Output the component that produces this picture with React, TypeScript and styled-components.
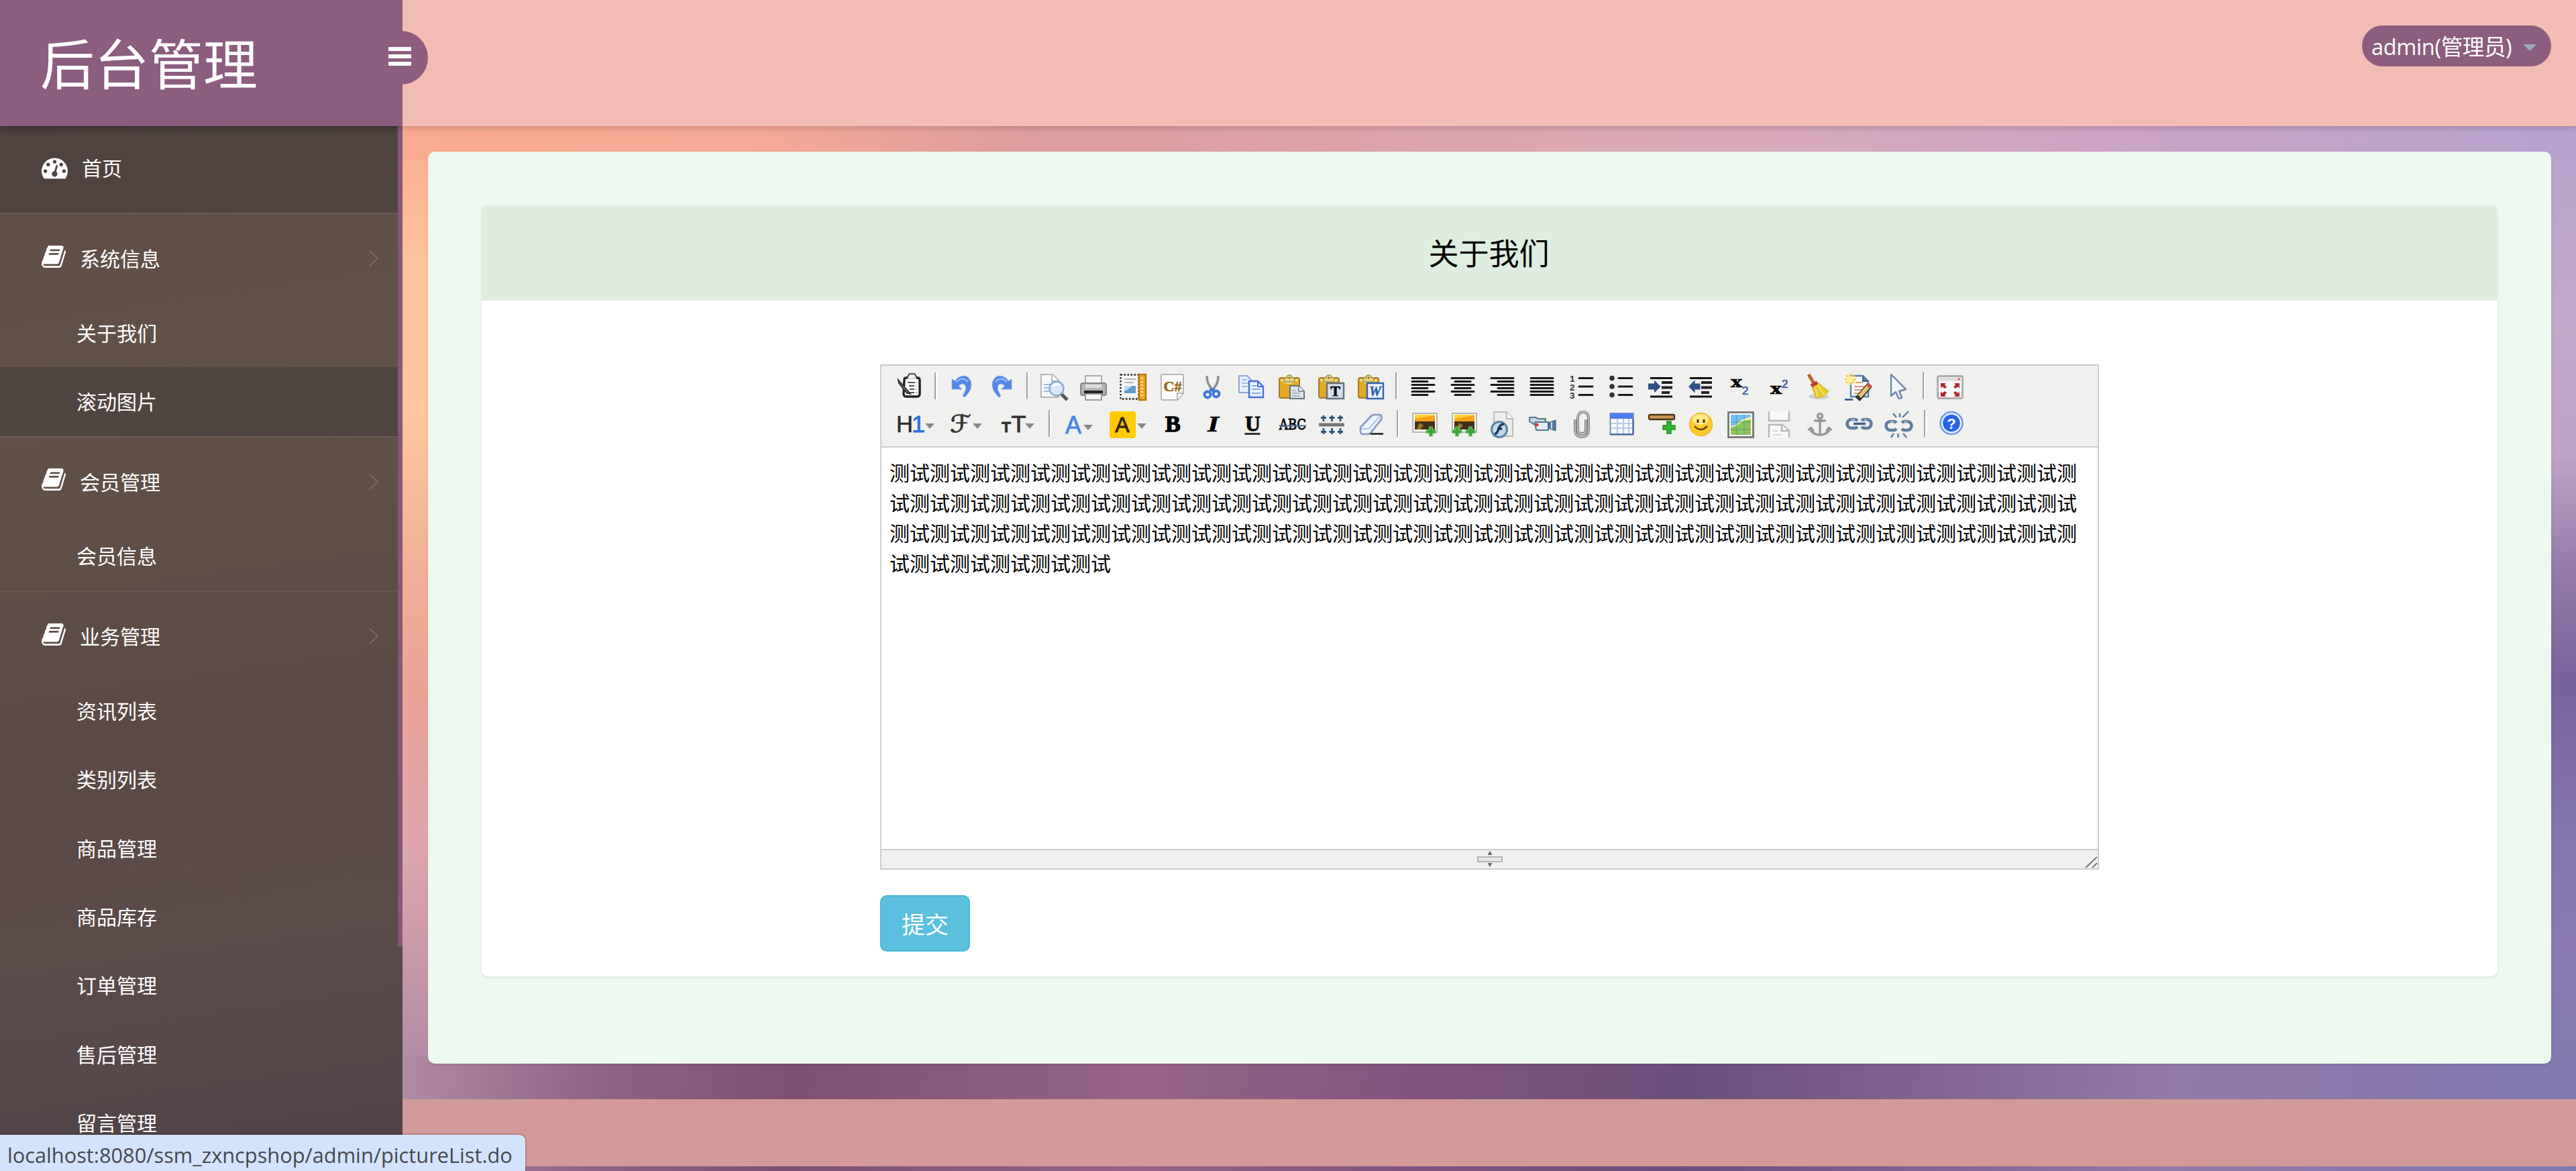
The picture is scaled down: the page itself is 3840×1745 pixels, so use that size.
import React from "react";
import styled, { createGlobalStyle, css } from "styled-components";

const GlobalStyle = createGlobalStyle`
  *, *::before, *::after { box-sizing: border-box; }
  html, body { margin: 0; padding: 0; }
  body {
    font-family: "Noto Sans", "Noto Sans CJK SC", sans-serif;
    color: #000;
    overflow: hidden;
  }
`;

/* ---------- shell ---------- */

const Shell = styled.div`
  position: relative;
  display: flex;
  flex-direction: column;
  width: 3840px;
  height: 1745px;
  overflow: hidden;
`;

const TopBar = styled.header`
  position: relative;
  z-index: 2;
  display: flex;
  flex: none;
  height: 188px;
  background: #f1bcb4;
  box-shadow: 0 2px 10px rgba(0, 0, 0, 0.2);
`;

const Brand = styled.div`
  position: relative;
  width: 600px;
  padding: 35px 0 0 60px;
  background: #8c5d7e;
  color: #fff;
  font-size: 81px;
  line-height: 120px;
`;

const MenuToggle = styled.button`
  position: absolute;
  top: 46px;
  right: -38px;
  display: flex;
  flex-direction: column;
  justify-content: center;
  align-items: center;
  gap: 5px;
  width: 80px;
  height: 80px;
  padding: 0 4px 4px 0;
  border: 0;
  border-radius: 40px;
  background: #8c5d7e;
`;

const ToggleBar = styled.span`
  width: 34px;
  height: 6px;
  border-radius: 1px;
  background: #fff;
`;

const UserArea = styled.div`
  display: flex;
  flex: 1;
  justify-content: flex-end;
  align-items: flex-start;
  padding: 38px 37px 0 0;
`;

const UserPill = styled.div`
  display: flex;
  align-items: center;
  gap: 17px;
  width: 282px;
  height: 61px;
  padding: 1px 0 0 14px;
  border-radius: 31px;
  background: #8c5d7e;
  color: #fff;
  font-family: "Open Sans", "Noto Sans CJK SC", sans-serif;
  font-size: 32.5px;
  line-height: 61px;
  white-space: nowrap;
`;

const UserName = styled.span`
  width: 209px;
  letter-spacing: -0.35px;
`;

const Caret = styled.span`
  border: 10px solid transparent;
  border-top-color: #a3a9b8;
  border-bottom: 0;
  margin-top: 4px;
`;

const Body = styled.div`
  display: flex;
  flex: 1;
  min-height: 0;
`;

/* ---------- sidebar ---------- */

const Sidebar = styled.nav`
  position: relative;
  flex: none;
  width: 600px;
  overflow: hidden;
  background: linear-gradient(
    172deg,
    #5f4c45 0%,
    #625148 22%,
    #5f4f47 40%,
    #5c4945 56%,
    #5b4b49 76%,
    #564749 88%,
    #4c3f44 100%
  );
`;

const ScrollThumb = styled.div`
  position: absolute;
  top: 0;
  right: 0;
  width: 7px;
  height: 1223px;
  background: #855877;
`;

const Group = styled.div`
  border-top: 2px solid rgba(255, 255, 255, 0.06);
`;

const itemText = css`
  color: #fff;
  font-size: 30px;
  white-space: nowrap;
`;

const HomeItem = styled.a`
  display: flex;
  align-items: center;
  gap: 21px;
  height: 129px;
  padding: 0 0 7px 62px;
  background: linear-gradient(rgba(0, 0, 0, 0.12), rgba(0, 0, 0, 0) 12px), rgba(52, 50, 54, 0.36);
  ${itemText}
`;

const GroupHead = styled.a`
  display: flex;
  align-items: center;
  height: 126px;
  padding: 0 31px 0 62px;
  ${itemText}
`;

const HeadLabel = styled.span`
  flex: 1;
  margin: 4px 0 0 21px;
`;

const SubItem = styled.a<{ $active?: boolean }>`
  display: flex;
  align-items: center;
  height: 102.4px;
  padding: 0 0 3px 114px;
  ${(p) => p.$active && "background: rgba(52, 50, 54, 0.36);"}
  ${itemText}
`;

const NavIcon = styled.svg<{ $w: number }>`
  flex: none;
  width: ${(p) => p.$w}px;
  height: 39px;
  fill: #fff;
`;

const Chevron = styled.svg`
  width: 20px;
  height: 28px;
  margin-top: 6px;
  fill: none;
  stroke: #7a6b64;
  stroke-width: 1.8;
`;

/* ---------- content ---------- */

const Main = styled.main`
  display: flex;
  flex: 1;
  flex-direction: column;
  padding: 38px 37px 0 38px;
  background:
    linear-gradient(90deg, #f9ab90 0%, #f4a995 17%, #dd9e9e 29%, #dba9b3 55%, #d5a8c0 69%, #c9a3c8 82%, #b7a3ce 100%) 0 0 / 100% 50px no-repeat,
    linear-gradient(96deg, #b18ba5 0%, #8c6486 9%, #7c5075 18%, #956487 34%, #825480 46%, #6c4f7b 59%, #83638f 70%, #937aa6 81%, #8a78ac 91%, #7f7ab1 100%) 0 100% / 100% 172px no-repeat,
    linear-gradient(180deg, #f8ab90 0%, #fec39e 15%, #ffc59f 31%, #efb097 47%, #e8a397 61%, #dca5ae 78%, #b18ba5 100%) 0 0 / 50px 1397px no-repeat,
    linear-gradient(180deg, #b7a3ce 0%, #c3a9c9 20%, #bfa3c6 35%, #967cab 47%, #78629a 59%, #8576ae 76%, #8a7ab1 88%, #837ab2 100%) 100% 0 / 50px 1397px no-repeat,
    #7b5680;
`;

const Panel = styled.section`
  flex: none;
  height: 1359px;
  padding: 80px 80px 0;
  border-radius: 10px;
  background: #edf8ee;
  box-shadow: 0 2px 4px rgba(0, 0, 0, 0.08);
`;

const Card = styled.div`
  height: 1149px;
  border-radius: 10px;
  background: #fff;
  box-shadow: 0 2px 4px rgba(0, 0, 0, 0.08);
`;

const CardTitle = styled.h4`
  height: 142px;
  margin: 0;
  padding-right: 2px;
  border-radius: 5px 5px 0 0;
  background: #deede0;
  font-size: 45px;
  font-weight: 400;
  line-height: 144px;
  text-align: center;
`;

const Form = styled.div`
  display: flex;
  flex-direction: column;
  align-items: flex-start;
  width: 1817px;
  margin: 95px auto 0 594px;
`;

const Submit = styled.button`
  width: 134px;
  height: 84px;
  margin-top: 38px;
  padding: 0;
  border: 2px solid #46b8da;
  border-radius: 10px;
  background: #5bc0de;
  color: #fff;
  font-family: "Noto Sans CJK SC", sans-serif;
  font-size: 35px;
  line-height: 78px;
`;

const Footer = styled.footer`
  flex: none;
  height: 100px;
  margin: 53px -37px 0 -38px;
  background: #d19997;
`;

/* ---------- editor ---------- */

const Editor = styled.div`
  display: flex;
  flex-direction: column;
  width: 1817px;
  height: 753px;
  border: 2px solid #ccc;
  background: #fff;
`;

const Toolbar = styled.div`
  flex: none;
  height: 122px;
  padding: 10px 13px 0;
  border-bottom: 2px solid #ccc;
  background: #f0f0ee;
`;

const ToolRow = styled.div`
  display: flex;
  height: 56px;
`;

const ToolButton = styled.svg<{ $w?: number }>`
  flex: none;
  width: ${(p) => p.$w ?? 40}px;
  height: 40px;
  margin: 2px 10px 0 9px;
  overflow: visible;
`;

const Separator = styled.span`
  flex: none;
  width: 4px;
  height: 40px;
  margin: 0 8px 0 7px;
  border-left: 2px solid #a0a0a0;
  border-right: 2px solid #fff;
`;

const EditArea = styled.div`
  flex: 1;
  padding: 14px 0 0 12px;
  font-family: "Noto Sans CJK SC", sans-serif;
  font-size: 30px;
  line-height: 45px;
`;

const Paragraph = styled.p`
  width: 1790px;
  margin: 0;
  word-break: break-all;
`;

const StatusBar = styled.div`
  display: flex;
  flex: none;
  justify-content: space-between;
  height: 29px;
  border-top: 2px solid #ccc;
  background: #f0f0ee;
`;

const Grip = styled.svg`
  width: 40px;
  height: 27px;
  margin-left: 887px;
`;

const Corner = styled.svg`
  width: 20px;
  height: 27px;
`;

const LinkHint = styled.div`
  position: absolute;
  z-index: 3;
  left: 0;
  bottom: 0;
  width: 783px;
  height: 54px;
  padding-left: 11px;
  border-radius: 0 9px 0 0;
  background: #d3e3fd;
  box-shadow: 0 0 3px rgba(0, 0, 0, 0.5);
  color: #45494e;
  font-family: "Open Sans", sans-serif;
  font-size: 30.75px;
  line-height: 60px;
  white-space: nowrap;
`;

/* ---------- nav glyphs ---------- */

const Dashboard = () => (
  <NavIcon $w={39} viewBox="0 0 1792 1792">
    <path d="M384 1152q0-53-37.500-90.500t-90.500-37.500-90.500 37.500-37.500 90.500 37.500 90.500 90.500 37.500 90.500-37.500 37.500-90.500zm192-448q0-53-37.500-90.500t-90.500-37.500-90.500 37.500-37.500 90.500 37.500 90.500 90.500 37.500 90.500-37.500 37.500-90.500zm428 481l101-382q6-26-7.500-48.500t-38.500-29.500-48 6.500-30 39.500l-101 382q-60 5-107 43.500t-63 98.500q-20 77 20 146t117 89 146-20 89-117q16-60-6-117t-72-91zm660-33q0-53-37.500-90.500t-90.500-37.500-90.500 37.500-37.500 90.500 37.500 90.500 90.500 37.500 90.500-37.500 37.500-90.500zm-640-640q0-53-37.500-90.500t-90.500-37.500-90.500 37.500-37.500 90.500 37.500 90.500 90.500 37.500 90.500-37.500 37.500-90.500zm448 192q0-53-37.500-90.500t-90.500-37.500-90.500 37.500-37.500 90.500 37.500 90.500 90.500 37.500 90.500-37.500 37.500-90.500zm320 448q0 261-141 483-19 29-54 29h-1402q-35 0-54-29-141-221-141-483 0-182 71-348t191-286 286-191 348-71 348 71 286 191 191 286 71 348z" />
  </NavIcon>
);

const Book = () => (
  <NavIcon $w={36} viewBox="64 0 1664 1792">
    <path d="M1703 478q40 57 18 129l-275 906q-19 64-76.500 107.500t-122.500 43.500h-923q-77 0-148.500-53.500t-99.500-131.500q-24-67-2-127 0-4 3-27t4-37q1-8-3-21.500t-3-19.500q2-11 8-21t16.500-23.500 16.500-23.500q23-38 45-91.500t30-91.500q3-10 .5-30t-.5-28q3-11 17-28t17-23q21-36 42-92t25-90q1-9-2.500-32t.5-28q4-13 22-30.500t22-22.500q19-26 42.500-84.500t27.500-96.500q1-8-3-25.500t-2-26.500q2-8 9-18t18-23 17-21q8-12 16.500-30.500t15-35 16-36 19.500-32 26.500-23.500 36-11.500 47.500 5.500l-1 3q38-9 51-9h761q74 0 114 56t18 130l-274 906q-36 119-71.500 153.500t-128.500 34.500h-869q-27 0-38 15-11 16-1 43 24 70 144 70h923q29 0 56-15.500t35-41.500l300-987q7-22 5-57 38 15 59 43zm-1064 2q-4 13 2 22.500t20 9.500h608q13 0 25.500-9.500t16.500-22.500l21-64q4-13-2-22.500t-20-9.500h-608q-13 0-25.500 9.500t-16.500 22.500zm-83 256q-4 13 2 22.500t20 9.500h608q13 0 25.500-9.500t16.500-22.500l21-64q4-13-2-22.500t-20-9.500h-608q-13 0-25.500 9.500t-16.500 22.500z" />
  </NavIcon>
);

/* ---------- toolbar drawings, each on a 40 x 40 field ---------- */

const SERIF = '"Liberation Serif", serif';
const SANS = '"Liberation Sans", sans-serif';
const SLAB = '"DejaVu Serif", serif';

const Lines = ({ rows }: { rows: [number, number, number][] }) => (
  <path d={rows.map(([x, y, w]) => `M${x} ${y}h${w}`).join("")} stroke="#1a1a1a" strokeWidth={3} strokeLinecap="round" fill="none" />
);

const Drop = ({ x, y = 20 }: { x: number; y?: number }) => <path d={`M${x - 1} ${y - 2}h14l-7 8z`} fill="#888" />;

const Plus = ({ x, y }: { x: number; y: number }) => (
  <path d={`M${x - 2.500} ${y - 7}h5v4.500h4.500v5h-4.500v4.500h-5v-4.500h-4.500v-5h4.500z`} fill="#3da53a" stroke="#7cc873" strokeWidth={1} />
);

const Clipboard = () => (
  <>
    <rect x={2} y={6} width={30} height={30} rx={3} fill="#e3a922" stroke="#a17a2c" strokeWidth={2} />
    <path d="M4 10q12 10 26 0v-2h-26z" fill="#f6e08c" />
    <path d="M9 6h4q0-4 4-4t4 4h4v6h-16z" fill="#e9d27f" stroke="#a68a45" strokeWidth={1.500} />
    <circle cx={17} cy={6} r={1.500} fill="#7a6530" />
  </>
);

const Photo = () => (
  <>
    <rect x={3} y={3} width={36} height={28} fill="#fafafa" stroke="#b5b5b5" strokeWidth={2} />
    <rect x={6} y={5} width={30} height={12} fill="#f9a11b" />
    <path d="M6 11l30-5v-1h-30z" fill="#ffd22e" />
    <rect x={6} y={15} width={30} height={12} fill="#40311c" />
    <path d="M13 17l6 4-5 6h-5z" fill="#9c7620" />
  </>
);

const Link = ({ dy = 0, split = 0 }: { dy?: number; split?: number }) => (
  <g fill="none" stroke="#5f7d9e" strokeWidth={4.6}>
    <path d={`M${17 - split} ${14 + dy}a6 6 0 0 0-5-2h-4a6.500 6.500 0 0 0 0 13h4a6 6 0 0 0 5-2`} />
    <path d={`M${23 + split} ${14 + dy}a6 6 0 0 1 5-2h3a6.500 6.500 0 0 1 0 13h-3a6 6 0 0 1-5-2`} />
    {split === 0 && <path d="M11 18.500h18" stroke="#3c6286" strokeWidth={3.500} />}
    <path d={`M${13 - split} ${12.500 + dy}h-5M${27 + split} ${12.500 + dy}h4`} stroke="#c3d2e2" strokeWidth={1.600} />
  </g>
);

const icons: Record<string, React.ReactNode> = {
  source: (
    <>
      <path d="M12 9q0-3 3-3h2l3-5h7l3 5h2q3 0 3 4v20q0 4-4 4h-16q-4 0-4-4z" fill="#fff" stroke="#222" strokeWidth={3.4} />
      <path d="M17 7h13l-3-6h-7z" fill="#f2f2f2" stroke="#bbb" />
      <path d="M17 13h11M19 18h8M20 23h7M19 28h8" stroke="#555" strokeWidth={2.2} />
      <path d="M30 12v17" stroke="#8bc5ea" strokeWidth={2.2} strokeDasharray="2 3" />
      <path d="M3 9l15 17 3 4-5-1-12-15z" fill="#666" stroke="#333" strokeWidth={1.800} />
    </>
  ),
  undo: (
    <>
      <path d="M5 8v15h15l-5-5q5-5 9-2 5 5-3 17l3 2q13-13 9-24-6-13-19-5-3 2-4 5z" fill="#5387e6" stroke="#86aaf0" />
      <path d="M12 12q9-9 17 0" stroke="#a8c2f5" strokeWidth={2} fill="none" />
    </>
  ),
  redo: (
    <g transform="translate(40 0) scale(-1 1)">
      <path d="M5 8v15h15l-5-5q5-5 9-2 5 5-3 17l3 2q13-13 9-24-6-13-19-5-3 2-4 5z" fill="#5387e6" stroke="#86aaf0" />
      <path d="M12 12q9-9 17 0" stroke="#a8c2f5" strokeWidth={2} fill="none" />
    </g>
  ),
  preview: (
    <>
      <path d="M1 1h17l9 9v25h-26z" fill="#f7f7f7" stroke="#b5b5b5" strokeWidth={2} />
      <path d="M17 1v10h10" fill="#fff" stroke="#b5b5b5" strokeWidth={2} />
      <path d="M5 16h10M5 21h8M5 26h9" stroke="#9eb8dd" strokeWidth={2} />
      <path d="M31 30l9 9" stroke="#555" strokeWidth={5} />
      <circle cx={24} cy={22} r={10.500} fill="#d9e7fb" stroke="#8fa9d0" strokeWidth={2.400} />
      <path d="M18 19q5-6 11-2" stroke="#fff" strokeWidth={3} fill="none" />
    </>
  ),
  print: (
    <>
      <path d="M8 17v-14h24v14" fill="#f6f6f6" stroke="#aaa" strokeWidth={2} />
      <rect x={1} y={14} width={38} height={18} rx={3} fill="#b5b5b5" stroke="#858585" strokeWidth={2} />
      <path d="M8 16h24v5h-24z" fill="#ddd" />
      <path d="M6 25h28v5h-28z" fill="#222" />
      <path d="M8 30h24v9h-24z" fill="#f6f6f6" stroke="#999" strokeWidth={2} />
    </>
  ),
  template: (
    <>
      <rect x={1.500} y={1.500} width={27} height={36} fill="#f6f6f6" stroke="#222" strokeWidth={2.400} strokeDasharray="2.600 2.400" />
      <path d="M7 8h18M7 13h14" stroke="#b8b8b8" strokeWidth={2} />
      <rect x={7} y={18} width={17} height={11} fill="#5f9ccb" />
      <path d="M7 18h12l-9 7h-3z" fill="#b8def3" />
      <rect x={29} y={1} width={10} height={38} fill="#f0a830" stroke="#bd7510" strokeWidth={2.500} />
      <path d="M31 7h4M31 12h4M31 17h4M31 22h4M31 27h4M31 32h4" stroke="#ffe08a" strokeWidth={2} />
    </>
  ),
  code: (
    <>
      <path d="M3 3q0-2 2-2h29q2 0 2 2v26l-9 10h-22q-2 0-2-2z" fill="#fbfbfb" stroke="#b5b5b5" strokeWidth={2} />
      <path d="M27 38v-9h9" fill="#fff" stroke="#b5b5b5" strokeWidth={2} />
      <text x={6.500} y={26} fontFamily={SERIF} fontWeight={700} fontSize={20} textLength={27} lengthAdjust="spacingAndGlyphs" fill="#96691f" stroke="#96691f" strokeWidth={0.600}>C#</text>
    </>
  ),
  cut: (
    <>
      <path d="M12 3q0 11 7 19l4 4M29 3q0 11-6 18l-5 5" stroke="#8b9099" strokeWidth={3.500} fill="none" />
      <circle cx={13} cy={31} r={4.500} fill="none" stroke="#3f78d8" strokeWidth={4} />
      <circle cx={26} cy={30} r={4.500} fill="none" stroke="#3f78d8" strokeWidth={4} />
      <path d="M16 24h8" stroke="#3f78d8" strokeWidth={5} />
    </>
  ),
  copy: (
    <>
      <path d="M1 3h12l7 7v18h-19z" fill="#e8f0fc" stroke="#8fa8d8" strokeWidth={2} />
      <path d="M5 9h8M5 14h10M5 19h10" stroke="#9ebdea" strokeWidth={2} />
      <path d="M16 11h13l8 8v16h-21z" fill="#eaf2fe" stroke="#4470d8" strokeWidth={2.400} />
      <path d="M29 11v8h8" fill="none" stroke="#4470d8" strokeWidth={2} />
      <path d="M20 18h7M20 23h13M20 29h13" stroke="#86a9ee" strokeWidth={2} />
    </>
  ),
  paste: (
    <>
      <Clipboard />
      <path d="M18 18h13l8 8v11h-21z" fill="#dce5ee" stroke="#65717d" strokeWidth={2} />
      <path d="M31 18v8h8" fill="#fff" stroke="#65717d" strokeWidth={1.500} />
      <path d="M21 25h6M21 29h12M21 33h12" stroke="#9aa8b5" strokeWidth={1.600} />
    </>
  ),
  plainpaste: (
    <>
      <Clipboard />
      <rect x={14} y={14} width={25} height={23} fill="#d4e0ee" stroke="#66717d" strokeWidth={2.500} />
      <text x={26.500} y={33} textAnchor="middle" fontFamily={SERIF} fontWeight={700} fontSize={22} stroke="#000" strokeWidth={0.600}>T</text>
    </>
  ),
  wordpaste: (
    <>
      <Clipboard />
      <rect x={15} y={14} width={24} height={23} fill="#eef4fd" stroke="#3467b8" strokeWidth={2.500} />
      <text x={27} y={32.500} textAnchor="middle" fontFamily={SERIF} fontWeight={700} fontStyle="italic" fontSize={20} fill="#2f62b5" stroke="#2f62b5" strokeWidth={0.600}>W</text>
    </>
  ),
  left: <Lines rows={[[4, 6.500, 33], [4, 11.500, 23], [4, 16.500, 33], [4, 21.500, 23], [4, 26.500, 33], [4, 31.500, 23]]} />,
  center: <Lines rows={[[4, 6.500, 33], [9, 11.500, 23], [4, 16.500, 33], [9, 21.500, 23], [4, 26.500, 33], [9, 31.500, 23]]} />,
  right: <Lines rows={[[4, 6.500, 33], [14, 11.500, 23], [4, 16.500, 33], [14, 21.500, 23], [4, 26.500, 33], [14, 31.500, 23]]} />,
  full: <Lines rows={[[4, 6.500, 33], [4, 11.500, 33], [4, 16.500, 33], [4, 21.500, 33], [4, 26.500, 33], [4, 31.500, 33]]} />,
  ordered: (
    <>
      <Lines rows={[[17, 6.500, 20], [17, 19, 20], [17, 31.500, 20]]} />
      <g fontFamily={SANS} fontWeight={700} fontSize={13.500} fill="#333">
        <text x={3} y={12}>1</text>
        <text x={3} y={24.500}>2</text>
        <text x={3} y={37}>3</text>
      </g>
    </>
  ),
  bullets: (
    <>
      <Lines rows={[[17, 6.500, 20], [17, 19, 20], [17, 31.500, 20]]} />
      <g fill="#333">
        <circle cx={7} cy={6.500} r={3.800} />
        <circle cx={7} cy={19} r={3.800} />
        <circle cx={7} cy={31.500} r={3.800} />
      </g>
    </>
  ),
  indent: (
    <>
      <path d="M5 6.500h33M5 34h33" stroke="#111" strokeWidth={2.800} />
      <path d="M22 13h16M22 20.500h16M22 28h12" stroke="#222" strokeWidth={3.800} />
      <path d="M2 14.500h9v-5l9.500 9.500-9.500 9.500v-5h-9z" fill="#2f4f86" />
    </>
  ),
  outdent: (
    <>
      <path d="M5 6.500h33M5 34h33" stroke="#111" strokeWidth={2.800} />
      <path d="M22 13h16M22 20.500h16M22 28h12" stroke="#222" strokeWidth={3.800} />
      <path d="M20.500 14.500h-8v-5l-9.500 9.500 9.500 9.500v-5h8z" fill="#2f4f86" />
    </>
  ),
  sub: (
    <>
      <text x={7} y={20} fontFamily={SLAB} fontWeight={700} fontSize={23} textLength={17} lengthAdjust="spacingAndGlyphs" stroke="#000" strokeWidth={0.500}>x</text>
      <text x={24} y={31} fontFamily={SANS} fontSize={17} fill="#3d5c9b" stroke="#3d5c9b" strokeWidth={0.600}>2</text>
    </>
  ),
  sup: (
    <>
      <text x={7} y={30} fontFamily={SLAB} fontWeight={700} fontSize={23} textLength={17} lengthAdjust="spacingAndGlyphs" stroke="#000" strokeWidth={0.500}>x</text>
      <text x={24} y={20.500} fontFamily={SANS} fontSize={17} fill="#3d5c9b" stroke="#3d5c9b" strokeWidth={0.600}>2</text>
    </>
  ),
  broom: (
    <>
      <ellipse cx={20} cy={34} rx={15} ry={4} fill="#cfcfcf" />
      <path d="M5 1l9 15" stroke="#b06a28" strokeWidth={5} />
      <path d="M10 19l9-6q9 8 16 13-8 10-19 10z" fill="#e9cb27" stroke="#c9a420" />
      <path d="M15 21l4 14M19 18l10 14" stroke="#f8e67c" strokeWidth={1.600} />
      <path d="M9 18l9-5" stroke="#c2392f" strokeWidth={5} />
    </>
  ),
  quick: (
    <>
      <path d="M9 3h18l8 8v23h-26z" fill="#f4f8fd" stroke="#5e82ab" strokeWidth={2.400} />
      <path d="M27 3v8h8" fill="#5e82ab" stroke="#3d6290" strokeWidth={2} />
      <path d="M16 13h11M14 19h16M14 24h12M14 29h9" stroke="#e39a72" strokeWidth={2} />
      <path d="M8 0v17M0 8.500h17M2 2l12 12M14 2l-12 12" stroke="#f8cf50" strokeWidth={3} />
      <circle cx={8} cy={8.500} r={5} fill="#fff0a0" />
      <path d="M37 17l-18 21" stroke="#333" strokeWidth={9} />
      <path d="M35 19l-13 15" stroke="#eac36a" strokeWidth={6} />
      <path d="M38 16l-3 3.500" stroke="#d0504c" strokeWidth={8} />
      <path d="M0 38.500h12" stroke="#2f4f86" strokeWidth={2.600} />
    </>
  ),
  pointer: (
    <path d="M10 1v32l7-6 4 9q3 2 5-1l-4-9 10-3z" fill="#f4f8fe" stroke="#6a86ad" strokeWidth={2.400} strokeLinejoin="round" />
  ),
  fullscreen: (
    <>
      <rect x={1.500} y={3.500} width={37} height={33} rx={2} fill="#fbfbfb" stroke="#adadad" strokeWidth={2.800} />
      <path d="M4 8h32" stroke="#ddd" strokeWidth={5} />
      <circle cx={33} cy={8} r={1.500} fill="#d33" />
      <path d="M6 14h8l-2 2 3 4-3 2-4-3-2 3zM34 14h-8l2 2-3 4 3 2 4-3 2 3zM6 34h8l-2-2 3-4-3-2-4 3-2-3zM34 34h-8l2-2-3-4 3-2 4 3 2-3z" fill="#b3262d" />
    </>
  ),
  heading: (
    <>
      <text x={0} y={31} fontFamily={SANS} fontSize={36} fill="#2b2b2b" stroke="#2b2b2b" strokeWidth={0.600} textLength={25} lengthAdjust="spacingAndGlyphs">H</text>
      <text x={23} y={31} fontFamily={SANS} fontSize={36} fill="#2f6fe4" stroke="#2f6fe4" strokeWidth={0.900}>1</text>
      <Drop x={44} />
    </>
  ),
  family: (
    <>
      <text x={4} y={31} fontFamily={'"DejaVu Sans", sans-serif'} fontSize={36} fill="#333" stroke="#333" strokeWidth={0.800} textLength={32} lengthAdjust="spacingAndGlyphs">ℱ</text>
      <Drop x={39} />
    </>
  ),
  size: (
    <>
      <g fontFamily={SANS} fill="#333" stroke="#333" strokeWidth={0.800}>
        <text x={4} y={31} fontSize={22} fontWeight={700} textLength={14} lengthAdjust="spacingAndGlyphs">T</text>
        <text x={18.500} y={31} fontSize={36}>T</text>
      </g>
      <Drop x={40} />
    </>
  ),
  color: (
    <>
      <text x={4} y={33} fontFamily={SANS} fontSize={36} fill="#4b86ee" stroke="#4b86ee" strokeWidth={0.800}>A</text>
      <Drop x={32} y={22} />
    </>
  ),
  highlight: (
    <>
      <rect x={-3} y={0} width={39} height={40} rx={4} fill="#ffcb05" />
      <text x={16} y={31} textAnchor="middle" fontFamily={SANS} fontSize={32} fill="#332700" stroke="#332700" strokeWidth={0.900}>A</text>
      <Drop x={39} />
    </>
  ),
  bold: <text x={7} y={30} fontFamily={SERIF} fontWeight={700} fontSize={34} stroke="#000" strokeWidth={1.400}>B</text>,
  italic: <text x={11} y={30} fontFamily={SERIF} fontWeight={700} fontStyle="italic" fontSize={34} textLength={17} lengthAdjust="spacingAndGlyphs" stroke="#000" strokeWidth={0.600}>I</text>,
  underline: (
    <>
      <text x={8} y={29} fontFamily={SERIF} fontWeight={700} fontSize={32} textLength={23} lengthAdjust="spacingAndGlyphs" stroke="#000" strokeWidth={0.900}>U</text>
      <path d="M7.500 33.500h23" stroke="#222" strokeWidth={2.800} />
    </>
  ),
  strike: (
    <>
      <text x={0} y={27} fontFamily={SLAB} fontSize={23} textLength={40} lengthAdjust="spacingAndGlyphs" stroke="#000" strokeWidth={0.900}>ABC</text>
      <path d="M0 21.500h40" stroke="#4b6e9c" strokeWidth={2.200} />
    </>
  ),
  lineheight: (
    <>
      <path d="M0 20h38" stroke="#777" strokeWidth={5} />
      <path d="M7 15v-9M19.500 15v-9M32 15v-9M3 9.500h8M15.500 9.500h8M28 9.500h8M7 25v9M19.500 25v9M32 25v9M3 30.500h8M15.500 30.500h8M28 30.500h8" stroke="#33587d" strokeWidth={2.800} />
    </>
  ),
  eraser: (
    <>
      <path d="M3 24l16-17q2-2 5-2h8q4 1 2 7l-15 19q-2 3-5 3h-7q-4 0-4-4z" fill="#edf3fc" stroke="#8498c0" strokeWidth={2.600} />
      <path d="M4 26h10q3 0 4-3l15-17" stroke="#b5c5e4" strokeWidth={2} fill="none" />
      <path d="M18 33.500h19" stroke="#222" strokeWidth={2.600} />
    </>
  ),
  image: (
    <>
      <Photo />
      <Plus x={30} y={30} />
    </>
  ),
  images: (
    <>
      <Photo />
      <Plus x={10} y={30} />
      <Plus x={30} y={30} />
    </>
  ),
  flash: (
    <>
      <path d="M6 1h19l9 10v26h-28z" fill="#ececec" stroke="#bbb" strokeWidth={2} />
      <path d="M25 1v10h9" fill="#fff" stroke="#bbb" strokeWidth={2} />
      <circle cx={14} cy={27} r={11.500} fill="#c2d8e8" stroke="#5d83a5" strokeWidth={3} />
      <path d="M21 19q-6 0-8 7t-6 8M11 26h7" stroke="#1d3d60" strokeWidth={3.500} fill="none" />
    </>
  ),
  media: (
    <>
      <path d="M0 9h10l2 2h12v9h-16l-8-5z" fill="#c9d6e2" stroke="#587794" strokeWidth={2} />
      <path d="M8 16h20v12h-18z" fill="#e4edf5" stroke="#587794" strokeWidth={2} />
      <path d="M28 17l11-4v16l-11-4z" fill="#54779a" stroke="#31597f" />
      <path d="M33 16v10" stroke="#d4e1ed" strokeWidth={2} />
      <circle cx={11} cy={20} r={2.500} fill="#e03a30" />
      <circle cx={23} cy={12} r={2} fill="#35b44a" />
    </>
  ),
  clip: (
    <>
      <path d="M9 12v17q1 9 10 9t10-9v-20q-1-8-8-8t-8 8v19q0 5 6 5t6-5v-16" fill="none" stroke="#808080" strokeWidth={4} />
      <path d="M9 12v17q1 9 10 9t10-9v-20q-1-8-8-8t-8 8v19q0 5 6 5t6-5v-16" fill="none" stroke="#cfcfcf" strokeWidth={1.400} />
    </>
  ),
  table: (
    <>
      <rect x={2.500} y={3} width={34} height={31} fill="#f8faff" stroke="#7790c0" strokeWidth={2} />
      <path d="M2 3h35v8h-35z" fill="#4b7ded" />
      <path d="M13 11v22M22 11v22M30 11v22M3 18h33M3 25h33" stroke="#b9c9e4" strokeWidth={2.200} />
      <path d="M36.500 11v23M2 34.500h35" stroke="#3f5f91" strokeWidth={2} />
    </>
  ),
  rule: (
    <>
      <rect x={1} y={5} width={38} height={7} rx={2} fill="#c99852" stroke="#4d3312" strokeWidth={2.400} />
      <path d="M28 15h6v6h6v6h-6v6h-6v-6h-6v-6h6z" fill="#34b530" stroke="#1e8a22" strokeWidth={1.500} />
    </>
  ),
  smile: (
    <>
      <circle cx={19.500} cy={19.500} r={17} fill="#fcc92a" stroke="#f0b638" strokeWidth={1.500} />
      <ellipse cx={19} cy={12} rx={12} ry={8} fill="#fff0a0" opacity={0.800} />
      <path d="M15 12v5M24 12v5" stroke="#4a3305" strokeWidth={3} />
      <path d="M10 22q9 10 19 0" stroke="#6a4a08" strokeWidth={2.600} fill="none" />
    </>
  ),
  map: (
    <>
      <rect x={1.500} y={1.500} width={37} height={37} fill="#fff" stroke="#7c7c7c" strokeWidth={3} />
      <rect x={5} y={5} width={30} height={30} fill="#6fc0f5" />
      <path d="M5 22l8-2 9-8 13-4v27h-30z" fill="#f6f0b4" />
      <path d="M5 24l9-3 10-7 11-2v23h-30z" fill="#8cc45c" />
      <path d="M14 5v30M25 5v30M5 16h30M5 27h30" stroke="#4d8a5e" strokeOpacity={0.450} strokeWidth={1.500} />
    </>
  ),
  pagebreak: (
    <g fill="#f9f9f9" stroke="#b8b8b8" strokeWidth={2.600}>
      <path d="M3 0v14h30v-14" />
      <path d="M3 39v-19h20l10 9v10" />
      <path d="M22 20v9h10" />
      <path d="M8 29h8M8 35h15" stroke="#ddd" />
    </g>
  ),
  anchor: (
    <g fill="none" stroke="#989898" strokeWidth={3.4}>
      <circle cx={20} cy={7} r={3.500} />
      <path d="M20 11v24M11 14h18M5 26q4 9 15 9t15-9" />
      <path d="M2 28l5-4 4 6M38 28l-5-4-4 6" strokeWidth={2.600} />
    </g>
  ),
  link: <Link />,
  unlink: (
    <>
      <Link dy={3} split={1} />
      <path d="M11 3l5 6M21 3v6M34 0l-9 9M12 33l-4 6M18.500 33v6M26 33l5 6" stroke="#587a9c" strokeWidth={2.400} />
    </>
  ),
  help: (
    <>
      <circle cx={20} cy={17.500} r={16.500} fill="#e8f1fd" stroke="#6d9be0" strokeWidth={2.500} />
      <circle cx={20} cy={17.500} r={12.800} fill="#2464e8" />
      <text x={20} y={25.500} textAnchor="middle" fontFamily={SANS} fontWeight={700} fontSize={22} fill="#fff">?</text>
    </>
  ),
};

const ROW_ONE = "source | undo redo | preview print template code cut copy paste plainpaste wordpaste | left center right full ordered bullets indent outdent sub sup broom quick pointer | fullscreen".split(" ");
const ROW_TWO = "heading family size | color highlight bold italic underline strike lineheight eraser | image images flash media clip table rule smile map pagebreak anchor link unlink | help".split(" ");

const WIDTHS: Record<string, number> = { heading: 57.3, family: 57.3, size: 57.4, color: 54, highlight: 54 };

const Tools = ({ names }: { names: string[] }) => (
  <ToolRow>
    {names.map((name, i) =>
      name === "|" ? (
        <Separator key={i} />
      ) : (
        <ToolButton key={i} $w={WIDTHS[name]} viewBox={`0 0 ${WIDTHS[name] ?? 40} 40`}>
          {icons[name]}
        </ToolButton>
      )
    )}
  </ToolRow>
);

const GROUPS: { title: string; items: string[] }[] = [
  { title: "系统信息", items: ["关于我们", "滚动图片"] },
  { title: "会员管理", items: ["会员信息"] },
  { title: "业务管理", items: ["资讯列表", "类别列表", "商品管理", "商品库存", "订单管理", "售后管理", "留言管理"] },
];

export default function App() {
  return (
    <Shell>
      <GlobalStyle />
      <TopBar>
        <Brand>
          后台管理
          <MenuToggle aria-label="menu">
            <ToggleBar />
            <ToggleBar />
            <ToggleBar />
          </MenuToggle>
        </Brand>
        <UserArea>
          <UserPill>
            <UserName>admin(管理员)</UserName>
            <Caret />
          </UserPill>
        </UserArea>
      </TopBar>
      <Body>
        <Sidebar>
          <HomeItem>
            <Dashboard />
            首页
          </HomeItem>
          {GROUPS.map((group) => (
            <Group key={group.title}>
              <GroupHead>
                <Book />
                <HeadLabel>{group.title}</HeadLabel>
                <Chevron viewBox="0 0 20 28">
                  <path d="M2 3l12 11-12 11" />
                </Chevron>
              </GroupHead>
              {group.items.map((item) => (
                <SubItem key={item} $active={item === "滚动图片"}>
                  {item}
                </SubItem>
              ))}
            </Group>
          ))}
          <ScrollThumb />
        </Sidebar>
        <Main>
          <Panel>
            <Card>
              <CardTitle>关于我们</CardTitle>
              <Form>
                <Editor>
                  <Toolbar>
                    <Tools names={ROW_ONE} />
                    <Tools names={ROW_TWO} />
                  </Toolbar>
                  <EditArea>
                    <Paragraph>{"测试".repeat(94)}</Paragraph>
                  </EditArea>
                  <StatusBar>
                    <Grip viewBox="0 0 40 27">
                      <path d="M20 1l3.500 6h-7zM20 25l3.500-6h-7z" fill="#666" />
                      <rect x={2} y={10} width={36} height={7} fill="#e6e6e4" stroke="#b8b8b8" strokeWidth={2} />
                    </Grip>
                    <Corner viewBox="0 0 20 27">
                      <path d="M2 26l17-16M12 26l7-7" stroke="#777" strokeWidth={2} />
                    </Corner>
                  </StatusBar>
                </Editor>
                <Submit>提交</Submit>
              </Form>
            </Card>
          </Panel>
          <Footer />
        </Main>
      </Body>
      <LinkHint>localhost:8080/ssm_zxncpshop/admin/pictureList.do</LinkHint>
    </Shell>
  );
}
